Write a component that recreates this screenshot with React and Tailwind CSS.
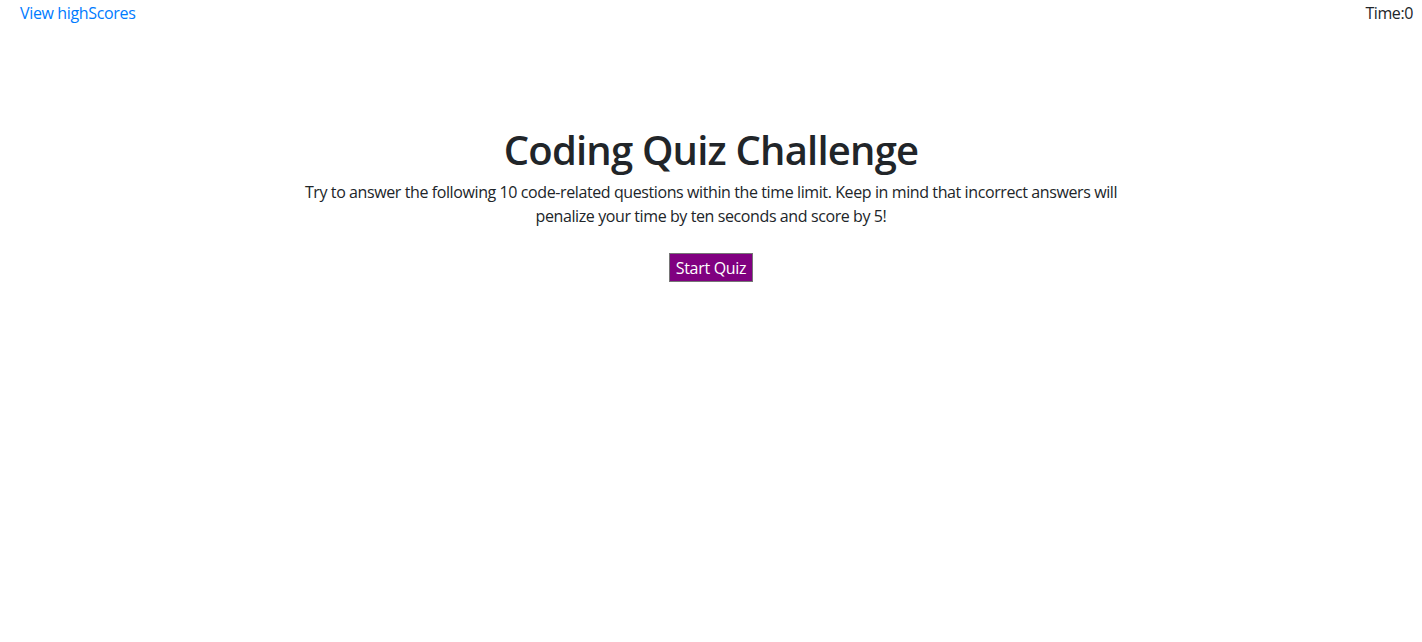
import React from 'react';

const App = () => {
  return (
    <div className="min-h-[642px] bg-white text-[#212529] font-['Open_Sans',sans-serif] text-base">
      {/* Top bar */}
      <div className="flex justify-between items-center h-[26px] pl-[20px] pr-[9px]">
        <a href="#" className="text-[#007bff] leading-6 tracking-[-0.35px]">View highScores</a>
        <span className="leading-6 tracking-[-0.4px]">Time:0</span>
      </div>

      {/* Intro card */}
      <div className="flex flex-col items-center text-center pt-[100px]">
        <h1 className="text-[40px] leading-[48px] font-semibold tracking-[-0.8px]">Coding Quiz Challenge</h1>
        <p className="mt-[6px] leading-6 tracking-[-0.4px]">
          Try to answer the following 10 code-related questions within the time limit. Keep in mind that incorrect answers will
          <br />
          penalize your time by ten seconds and score by 5!
        </p>
        <button className="mt-[25px] h-[29px] w-[84px] bg-[#800080] text-white border border-[#767676] leading-none tracking-[-0.3px]">
          Start Quiz
        </button>
      </div>
    </div>
  );
};

export default App;
